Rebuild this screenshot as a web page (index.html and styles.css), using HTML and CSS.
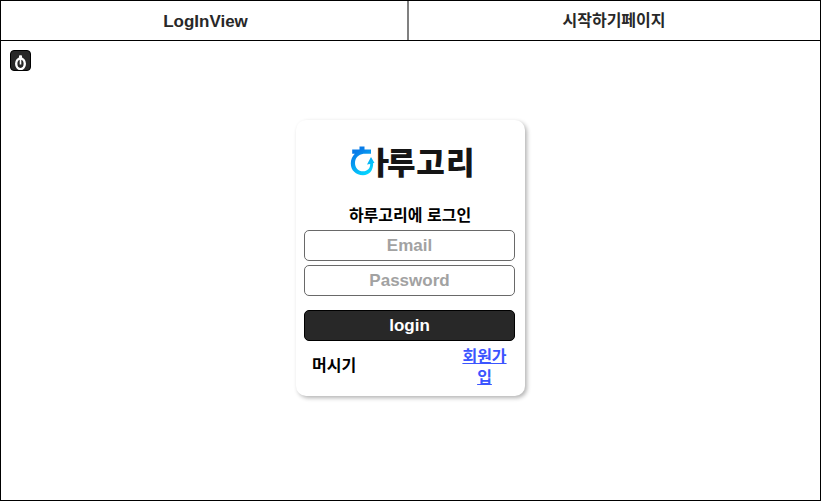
FILE: index.html
```
<!DOCTYPE html>
<html lang="ko">
<head>
<meta charset="utf-8">
<title>하루고리</title>
<link rel="stylesheet" href="styles.css">
</head>
<body>
<div class="page">
  <nav class="tabs">
    <a class="tab">LogInView</a>
    <a class="tab ko">시작하기페이지</a>
  </nav>
  <main class="content">
    <button class="badge" aria-label="menu">
      <svg width="19" height="19" viewBox="0 0 19 19"><ellipse cx="9.500" cy="12.800" rx="4.300" ry="5.300" fill="none" stroke="#fff" stroke-width="2.400"/><path d="M9.500 4.500v9" stroke="#fff" stroke-width="1.600"/><path d="M9.500 4.500v3" stroke="#fff" stroke-width="3"/></svg>
    </button>
    <form class="card">
      <svg class="logo" width="126" height="36" viewBox="0 0 126 36">
        <defs><linearGradient id="blue" x1="0" y1="0" x2="0.6" y2="1"><stop offset="0.25" stop-color="#087be8"/><stop offset="1" stop-color="#04d5ff"/></linearGradient></defs>
        <path fill="url(#blue)" d="M10.500 2.500h5v3H22v4.200h-7.500C9.500 10.500 6 14 6 19c0 4.800 3.300 8.300 8 8.300 4.500 0 7.300-3 7.200-7.300l-3.200.5 4-7.500 3.500 6h-1.300C24.200 26.500 20.500 31.200 14 31.200 6.800 31.200 1.800 26.200 1.800 19.500c0-4.200 1.600-7.500 4-9.800H3.200V5.500h7.300z"/>
        <text class="wordmark" y="30" x="18.300 37.900 67.300 97">ㅏ루고리</text>
      </svg>
      <div class="heading ko">하루고리에 로그인</div>
      <input class="field" type="email" placeholder="Email">
      <input class="field" type="password" placeholder="Password">
      <button class="submit" type="button">login</button>
      <div class="links ko">
        <span class="name">머시기</span>
        <a class="join">회원가입</a>
      </div>
    </form>
  </main>
</div>
</body>
</html>
```
FILE: styles.css
```
* { box-sizing: border-box; }
body {
  margin: 0;
  font: bold 17px/21px "Liberation Sans", "Noto Sans CJK KR", sans-serif;
  color: #000;
  background: #fff;
}
.page {
  height: 501px;
  border: 1px solid #000;
  display: flex;
  flex-direction: column;
}
.ko { font-family: "Noto Sans CJK KR", sans-serif; font-size: 16px; }
.tabs {
  display: grid;
  grid-template-columns: 408px 1fr;
  height: 40px;
  border-bottom: 1px solid #000;
  color: #282828;
}
.tab { display: flex; align-items: center; justify-content: center; padding: 0 1px 2px 0; }
.tab:first-child { border-right: 2px solid #808080; padding: 1px 0 0 3px; }
.content {
  flex: 1;
  display: flex;
  flex-direction: column;
  padding: 9px;
}
.badge {
  width: 21px;
  height: 21px;
  padding: 0;
  border: 1px solid #000;
  border-radius: 4px;
  background: #282828;
  overflow: hidden;
}
.badge svg { display: block; }
.card {
  width: 229px;
  height: 276px;
  margin: 49px 0 0 286px;
  padding: 24px 10px 0 8px;
  border-radius: 10px;
  box-shadow: 2px 2px 4px rgba(0, 0, 0, .3);
  display: flex;
  flex-direction: column;
}
.logo { display: block; margin-left: 45px; overflow: visible; }
.wordmark { font: 900 31px "Noto Sans CJK KR", sans-serif; fill: #151515; }
.heading { height: 21px; margin: 24px 0 5px; padding-left: 1px; text-align: center; }
.field, .submit {
  display: block;
  width: 211px;
  height: 31px;
  padding: 0;
  border: 1px solid #696969;
  border-radius: 5px;
  font: bold 17px/21px "Liberation Sans", sans-serif;
  text-align: center;
  background: #fff;
}
.field + .field { margin-top: 4px; }
.field::placeholder { color: #a2a2a2; opacity: 1; }
.submit { margin-top: 14px; border-color: #000; background: #282828; color: #fff; }
.links {
  display: flex;
  justify-content: space-between;
  align-items: center;
  margin-top: 4px;
  padding: 0 8px;
}
.name { padding-bottom: 3px; }
.join {
  width: 45px;
  text-align: center;
  color: #3b55ff;
  text-decoration: underline;
  word-break: break-all;
}
```
